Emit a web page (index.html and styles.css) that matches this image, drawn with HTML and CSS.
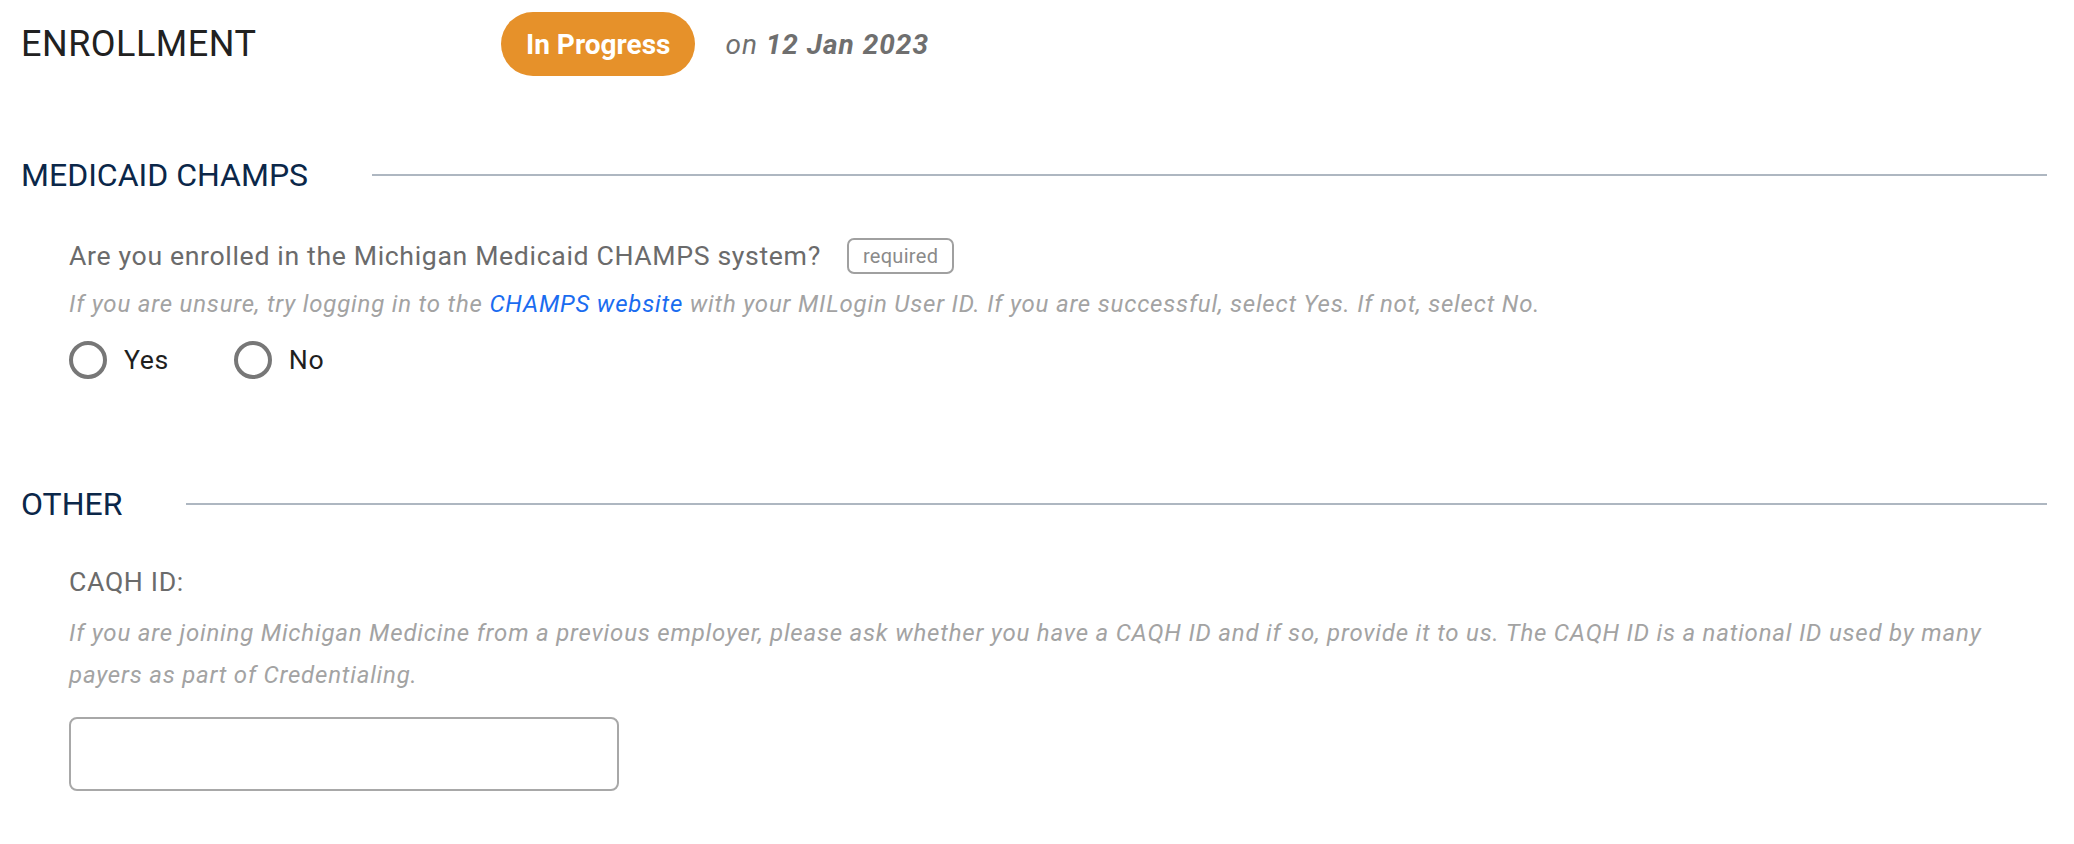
FILE: index.html
```html
<!DOCTYPE html>
<html>
<head>
	<title>Enrollment</title>
	<link rel="stylesheet" href="styles.css">
</head>
<body>
	<div class="page-head">
		<h1 class="page-title">ENROLLMENT</h1>
		<span class="status">In Progress</span>
		<span class="status-date">on <b>12 Jan 2023</b></span>
	</div>

	<div class="section section-first">
		<div class="section-head">
			<h2>MEDICAID CHAMPS</h2>
			<span class="rule"></span>
		</div>
		<div class="field">
			<div class="question">
				<label>Are you enrolled in the Michigan Medicaid CHAMPS system?</label>
				<span class="required">required</span>
			</div>
			<p class="hint">If you are unsure, try logging in to the <a href="#">CHAMPS website</a> with your MILogin User ID. If you are successful, select Yes. If not, select No.</p>
			<div class="choices">
				<label class="choice"><input type="radio" name="champs" value="yes"> Yes</label>
				<label class="choice"><input type="radio" name="champs" value="no"> No</label>
			</div>
		</div>
	</div>

	<div class="section section-other">
		<div class="section-head">
			<h2>OTHER</h2>
			<span class="rule"></span>
		</div>
		<div class="field">
			<div class="question caqh">
				<label for="caqh">CAQH ID:</label>
			</div>
			<p class="hint hint-long">If you are joining Michigan Medicine from a previous employer, please ask whether you have a CAQH ID and if so, provide it to us. The CAQH ID is a national ID used by many payers as part of Credentialing.</p>
			<input type="text" id="caqh" name="caqh" class="text-input">
		</div>
	</div>
</body>
</html>
```

FILE: styles.css
```css
html { background: #ffffff; }
body { margin: 0; padding: 12px 27px 40px 21px; font-family: Roboto, "Liberation Sans", sans-serif; }

.page-head { display: flex; align-items: center; height: 64px; }
.page-title { width: 480px; margin: 0; font-size: 36px; font-weight: 400; color: #212121; line-height: 40px; letter-spacing: 0.5px; }
.status { display: inline-flex; align-items: center; height: 64px; padding: 0 25px; border-radius: 32px; background-color: #e6912a; color: #ffffff; font-size: 28px; font-weight: 700; }
.status-date { margin-left: 30px; font-size: 28px; font-style: italic; color: #6f6f6f; letter-spacing: 1px; }
.status-date b { font-weight: 700; }

.section-head { display: flex; align-items: center; height: 40px; }
.section-head h2 { margin: 0; font-size: 32px; font-weight: 400; color: #0b2749; line-height: 40px; }
.section-head .rule { flex: 1; height: 2px; margin-left: 64px; background-color: #aeb7c1; }
.section-first { margin-top: 79px; }
.section-other { margin-top: 104px; }

.field { padding-left: 48px; }
.question { display: flex; align-items: center; height: 36px; margin-top: 43px; font-size: 26.67px; color: #6b6b6b; letter-spacing: 0.64px; }
.question.caqh { margin-top: 40px; }
.required { display: inline-flex; align-items: center; box-sizing: border-box; height: 36px; margin-left: 26px; padding: 0 14px; border: 2px solid #a0a0a0; border-radius: 7px; font-size: 20px; color: #8a8a8a; letter-spacing: 0.3px; }

.hint { margin: 9px 0 0; font-size: 24px; font-style: italic; line-height: 42px; color: #a3a3a3; letter-spacing: 0.8px; }
.hint a { color: #1a6cf0; text-decoration: none; }
.hint-long { margin-top: 12px; }

.choices { display: flex; align-items: center; height: 40px; margin-top: 15px; }
.choice { display: flex; align-items: center; margin-right: 65px; font-size: 26.67px; color: #1f1f1f; letter-spacing: 0.6px; }
.choice input { appearance: none; -webkit-appearance: none; box-sizing: border-box; width: 38px; height: 38px; margin: 0 17px 0 0; border: 4px solid #777777; border-radius: 50%; background: #ffffff; }

.text-input { display: block; box-sizing: border-box; width: 550px; height: 74px; margin-top: 21px; border: 2px solid #a8a8a8; border-radius: 8px; font-size: 26px; padding: 0 16px; }
```
